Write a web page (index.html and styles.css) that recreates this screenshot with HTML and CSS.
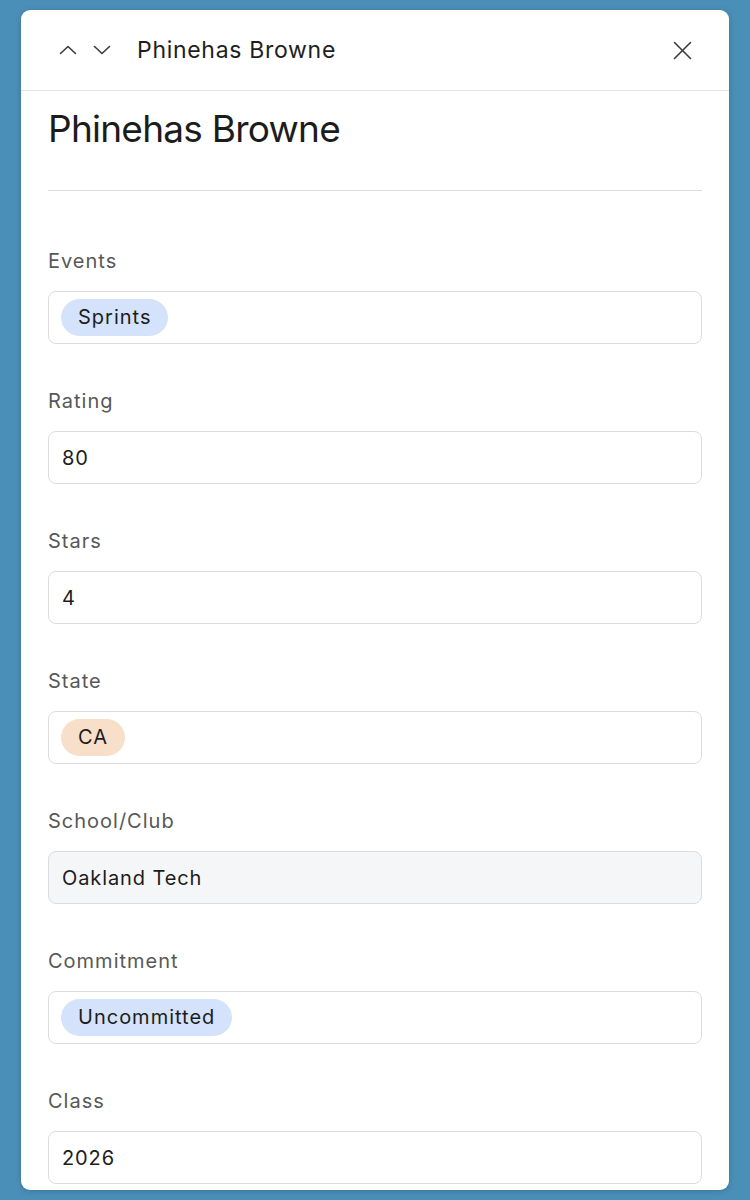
FILE: index.html
```html
<!DOCTYPE html>
<html lang="en">
<head>
<meta charset="utf-8">
<title>Phinehas Browne</title>
<link rel="stylesheet" href="styles.css">
</head>
<body>
<div class="card">
  <header class="header">
    <div class="nav">
      <button class="icon-btn" aria-label="Previous">
        <svg width="18" height="10" viewBox="0 0 18 10"><polyline points="1.5,8.5 9,1.5 16.5,8.5" fill="none" stroke="#3a3a3a" stroke-width="1.6" stroke-linecap="round" stroke-linejoin="round"/></svg>
      </button>
      <button class="icon-btn" aria-label="Next">
        <svg width="18" height="10" viewBox="0 0 18 10"><polyline points="1.5,1.5 9,8.5 16.5,1.5" fill="none" stroke="#3a3a3a" stroke-width="1.6" stroke-linecap="round" stroke-linejoin="round"/></svg>
      </button>
      <span class="header-title">Phinehas Browne</span>
    </div>
    <button class="icon-btn close" aria-label="Close">
      <svg width="19" height="19" viewBox="0 0 19 19"><path d="M1.5 1.5 L17.5 17.5 M17.5 1.5 L1.5 17.5" fill="none" stroke="#3a3a3a" stroke-width="1.6" stroke-linecap="round"/></svg>
    </button>
  </header>
  <main class="body">
    <h1 class="title">Phinehas Browne</h1>
    <hr class="divider">
    <div class="field">
      <div class="label">Events</div>
      <div class="box"><span class="tag tag-blue">Sprints</span></div>
    </div>
    <div class="field">
      <div class="label">Rating</div>
      <div class="box"><span class="value">80</span></div>
    </div>
    <div class="field">
      <div class="label">Stars</div>
      <div class="box"><span class="value">4</span></div>
    </div>
    <div class="field">
      <div class="label">State</div>
      <div class="box"><span class="tag tag-peach">CA</span></div>
    </div>
    <div class="field">
      <div class="label">School/Club</div>
      <div class="box box-filled"><span class="value">Oakland Tech</span></div>
    </div>
    <div class="field">
      <div class="label">Commitment</div>
      <div class="box"><span class="tag tag-blue">Uncommitted</span></div>
    </div>
    <div class="field last">
      <div class="label">Class</div>
      <div class="box"><span class="value">2026</span></div>
    </div>
  </main>
</div>
</body>
</html>
```
FILE: styles.css
```css
* { box-sizing: border-box; }
html, body { margin: 0; padding: 0; }
body {
  background: #4a8fb8;
  font-family: Inter, "Noto Sans", sans-serif;
  padding: 10px 21px 0 21px;
  height: 1200px;
  overflow: hidden;
}
.card {
  background: #ffffff;
  border-radius: 9px;
  box-shadow: 0 1px 6px rgba(0, 0, 0, 0.18);
  padding-bottom: 6px;
}
.header {
  height: 81px;
  border-bottom: 1px solid #e3e3e3;
  display: flex;
  align-items: center;
  justify-content: space-between;
  padding: 0 29px 0 30px;
}
.nav { display: flex; align-items: center; }
.icon-btn {
  border: 0;
  background: none;
  padding: 0;
  width: 34px;
  height: 34px;
  display: flex;
  align-items: center;
  justify-content: center;
  cursor: pointer;
}
.header-title {
  margin-left: 18px;
  font-size: 23px;
  color: #1e1e1e;
  letter-spacing: 0.7px;
}
.close { width: 36px; height: 36px; }
.body { padding: 0 27px; }
.title {
  margin: 16px 0 0 0;
  font-size: 37px;
  line-height: 44px;
  font-weight: 400;
  color: #1c1c1c;
  letter-spacing: -0.75px;
}
.divider {
  border: 0;
  border-top: 1px solid #dedede;
  margin: 39px 0 56px 0;
}
.field { margin-bottom: 43px; }
.field.last { margin-bottom: 0; }
.label {
  font-size: 20px;
  line-height: 28px;
  color: #585858;
  margin-bottom: 16px;
  letter-spacing: 1px;
}
.box {
  height: 53px;
  border: 1px solid #dcdcdc;
  border-radius: 8px;
  display: flex;
  align-items: center;
  padding: 0 12px;
}
.box-filled { background: #f5f6f8; }
.value {
  font-size: 20px;
  color: #1c1c1c;
  padding-left: 1px;
  letter-spacing: 0.9px;
}
.tag {
  font-size: 20px;
  color: #1c1c1c;
  height: 37px;
  line-height: 37px;
  padding: 0 17px;
  border-radius: 19px;
  letter-spacing: 1px;
}
.tag-blue { background: #d4e3fb; }
.tag-peach { background: #f8dfca; }
```
